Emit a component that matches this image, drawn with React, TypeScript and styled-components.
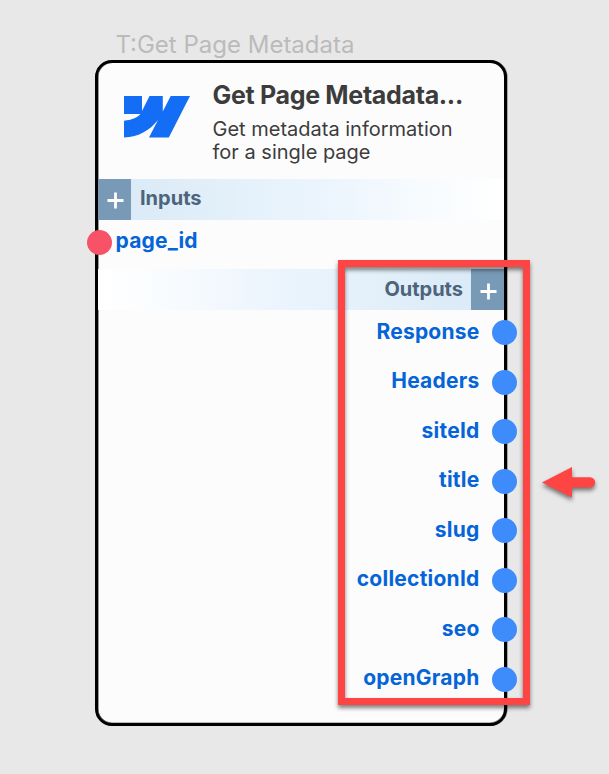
import React from "react";
import styled, { createGlobalStyle } from "styled-components";

const GlobalStyle = createGlobalStyle`
  *, *::before, *::after { box-sizing: border-box; }
  html, body { margin: 0; background: #e8e8e8; }
  body { font-family: Inter, "Liberation Sans", sans-serif; overflow: hidden; }
`;

const Canvas = styled.main`
  position: relative;
  width: 609px;
  height: 774px;
  padding: 30px 0 0 95px;
  background: #e8e8e8;
`;

const NodeLabel = styled.div`
  height: 30px;
  padding-left: 20.5px;
  font-size: 24px;
  font-weight: 370;
  line-height: 30px;
  color: #bbb;
  white-space: nowrap;
`;

const Card = styled.section`
  width: 412px;
  height: 666px;
  border: 3px solid #000;
  border-radius: 17px;
  background: #fcfcfc;
  box-shadow: inset 0.6px 0 0 #555, inset 0 -0.6px 0 #777, 0.6px 0 0 #777;
`;

const Header = styled.header`
  display: flex;
  height: 115.5px;
  padding: 17px 0 0 26px;
`;

const Logo = styled.svg`
  flex: none;
  width: 66px;
  height: 42px;
  margin: 16px 22.5px 0 0;
`;

const Title = styled.h1`
  margin: 0;
  font-size: 25px;
  font-weight: 700;
  line-height: 31px;
  letter-spacing: -0.32px;
  color: #3c3c3c;
  white-space: nowrap;
`;

const Description = styled.p`
  margin: 7px 0 0;
  font-size: 20px;
  font-weight: 370;
  line-height: 23px;
  color: #3c3c3c;
  white-space: nowrap;
`;

const Band = styled.div<{ $side: "left" | "right" }>`
  display: flex;
  flex-direction: ${(p) => (p.$side === "left" ? "row" : "row-reverse")};
  height: 41px;
  background: linear-gradient(
    to ${(p) => (p.$side === "left" ? "right" : "left")},
    #d8e9f6 0%, #deedf8 20%, #e6f2fb 40%, #edf5fd 60%, #f7fbfe 80%, #fff 100%
  );
`;

const AddButton = styled.button`
  display: flex;
  flex: none;
  align-items: center;
  justify-content: center;
  width: 33px;
  height: 41px;
  padding: 3px 0 0 1px;
  border: 0;
  background: #789ab6;
`;

const BandTitle = styled.h2<{ $lineHeight: number }>`
  margin: 0 8px 0 9px;
  font-size: 20px;
  font-weight: 700;
  line-height: ${(p) => p.$lineHeight}px;
  color: #4c647c;
`;

const PortRow = styled.div<{ $side: "left" | "right" }>`
  display: flex;
  flex-direction: ${(p) => (p.$side === "left" ? "row" : "row-reverse")};
  align-items: center;
  gap: ${(p) => (p.$side === "left" ? "4px" : "12.5px")};
  height: 49.5px;
  margin: ${(p) => (p.$side === "left" ? "0 0 0 -11.5px" : "0 -13px 0 0")};
  padding-bottom: 4.5px;
`;

const Port = styled.span<{ $color: string }>`
  flex: none;
  width: 25px;
  height: 25px;
  border-radius: 50%;
  background: ${(p) => p.$color};
`;

const PortName = styled.span`
  margin-top: -1.5px;
  font-size: 21px;
  font-weight: 700;
  line-height: 26px;
  letter-spacing: 0.23px;
  color: #0565d8;
`;

const Highlight = styled.div`
  position: absolute;
  left: 338px;
  top: 260px;
  width: 192px;
  height: 445px;
  border: 7px solid #ff4444;
  filter: drop-shadow(0 3px 2px rgba(0, 0, 0, 0.5));
`;

const Pointer = styled.svg`
  position: absolute;
  left: 542px;
  top: 467px;
  width: 54px;
  height: 31px;
  overflow: visible;
  filter: drop-shadow(0 3px 2px rgba(0, 0, 0, 0.5));
`;

const outputs = [
  "Response",
  "Headers",
  "siteId",
  "title",
  "slug",
  "collectionId",
  "seo",
  "openGraph",
];

const PlusIcon = () => (
  <svg width="17" height="17" viewBox="0 0 17 17" aria-hidden="true">
    <path d="M8.5 .5v16M.5 8.5h16" stroke="#fff" strokeWidth="2.8" />
  </svg>
);

export default function App() {
  return (
    <>
      <GlobalStyle />
      <Canvas>
        <NodeLabel>T:Get Page Metadata</NodeLabel>
        <Card>
          <Header>
            <Logo viewBox="0 0 66 42" aria-hidden="true">
              <path
                fill="#146ef5"
                d="M0 0H18V15L25.5 0H38.8V15.5L46.7 0H66L44.8 41.6H25L34 24C26 34 15 41 0 41.6V24.7C8 24 12.5 22 16.5 18H0Z"
              />
            </Logo>
            <div>
              <Title>Get Page Metadata...</Title>
              <Description>
                Get metadata information
                <br />
                for a single page
              </Description>
            </div>
          </Header>
          <Band $side="left">
            <AddButton aria-label="Add input"><PlusIcon /></AddButton>
            <BandTitle $lineHeight={38}>Inputs</BandTitle>
          </Band>
          <PortRow $side="left">
            <Port $color="#f75267" />
            <PortName>page_id</PortName>
          </PortRow>
          <Band $side="right">
            <AddButton aria-label="Add output"><PlusIcon /></AddButton>
            <BandTitle $lineHeight={40}>Outputs</BandTitle>
          </Band>
          {outputs.map((name) => (
            <PortRow $side="right" key={name}>
              <Port $color="#3e8bfc" />
              <PortName>{name}</PortName>
            </PortRow>
          ))}
        </Card>
        <Highlight />
        <Pointer viewBox="0 0 54 31" aria-hidden="true">
          <path fill="#ff4444" d="M0 15.5L30 0V10.2H48A5.2 5.2 0 0 1 48 20.6H30V30.5Z" />
        </Pointer>
      </Canvas>
    </>
  );
}
